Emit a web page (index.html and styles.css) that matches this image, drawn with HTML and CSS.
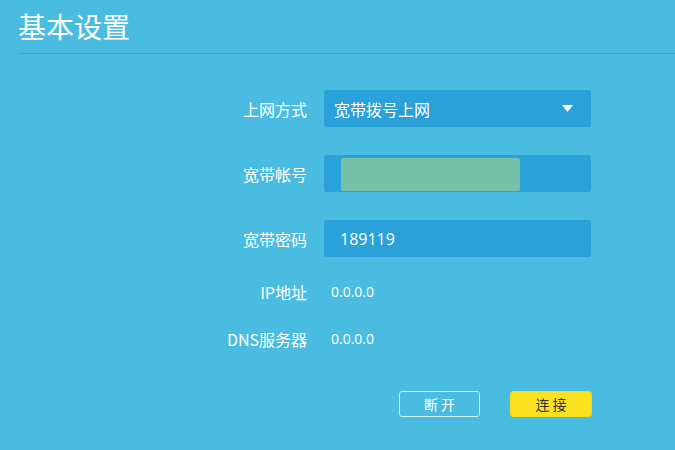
FILE: index.html
```html
<!DOCTYPE html>
<html lang="zh-CN">
<head>
<meta charset="utf-8">
<title>基本设置</title>
<link rel="stylesheet" href="styles.css">
</head>
<body>
<header class="head">
  <h1 class="title">基本设置</h1>
</header>
<main class="form">
  <div class="fields">
    <div class="row">
      <span class="label">上网方式</span>
      <div class="field select">
        <span class="value">宽带拨号上网</span>
        <svg class="caret" width="11" height="7" viewBox="0 0 11 7"><path d="M0 0H11L5.5 7Z" fill="#ffffff"/></svg>
      </div>
    </div>
    <div class="row">
      <span class="label">宽带帐号</span>
      <div class="field text">
        <span class="mask"></span>
      </div>
    </div>
    <div class="row">
      <span class="label">宽带密码</span>
      <div class="field text">
        <span class="value num">189119</span>
      </div>
    </div>
  </div>
  <div class="row info">
    <span class="label">IP地址</span>
    <span class="info-value">0.0.0.0</span>
  </div>
  <div class="row info">
    <span class="label">DNS服务器</span>
    <span class="info-value">0.0.0.0</span>
  </div>
  <div class="actions">
    <button class="btn ghost" type="button">断 开</button>
    <button class="btn primary" type="button">连 接</button>
  </div>
</main>
</body>
</html>
```
FILE: styles.css
```css
html, body {
  margin: 0;
  padding: 0;
}
body {
  width: 675px;
  height: 450px;
  overflow: hidden;
  background: #4abce1;
  color: #ffffff;
  font-family: "Noto Sans CJK SC", "Noto Sans", sans-serif;
}
.head {
  margin-left: 18px;
  padding: 10px 0 11px;
  border-bottom: 1px solid #39a9d3;
}
.title {
  margin: 0;
  font-size: 28px;
  line-height: 32px;
  font-weight: 400;
}
.form {
  width: 592px;
  padding-top: 36px;
  display: flex;
  flex-direction: column;
}
.fields {
  display: flex;
  flex-direction: column;
  gap: 28px;
}
.row {
  display: flex;
  align-items: center;
  gap: 17px;
}
.label {
  width: 307px;
  flex: none;
  text-align: right;
  font-size: 16px;
  line-height: 24px;
}
.field {
  width: 267px;
  height: 37px;
  box-sizing: border-box;
  background: #2aa1d9;
  border-radius: 3px;
  display: flex;
  align-items: center;
}
.select {
  padding: 0 18px 0 10px;
}
.text {
  padding: 0 16px;
}
.value {
  font-size: 16px;
  line-height: 24px;
}
.num {
  font-family: "Open Sans", "Noto Sans", sans-serif;
  font-size: 16px;
}
.caret {
  margin-left: auto;
  display: block;
}
.mask {
  display: block;
  width: 179px;
  height: 33px;
  margin: 2px 0 1px 1px;
  background: #77c1a9;
  border-radius: 2px;
}
.info {
  margin-top: 23px;
  height: 24px;
}
.info-value {
  font-family: "Open Sans", "Noto Sans", sans-serif;
  font-size: 14px;
  line-height: 24px;
  margin-left: 7px;
}
.actions {
  margin-top: 40px;
  display: flex;
  justify-content: flex-end;
  gap: 30px;
}
.btn {
  width: 82px;
  height: 26px;
  box-sizing: border-box;
  border-radius: 3px;
  font-family: "Noto Sans CJK SC", sans-serif;
  font-size: 14px;
  line-height: 1;
  padding: 0;
  cursor: pointer;
}
.ghost {
  background: transparent;
  border: 1px solid #d6f0f9;
  color: #ffffff;
  width: 81px;
}
.primary {
  background: #f9e21f;
  border: 1px solid #f2da16;
  color: #333333;
}
```
